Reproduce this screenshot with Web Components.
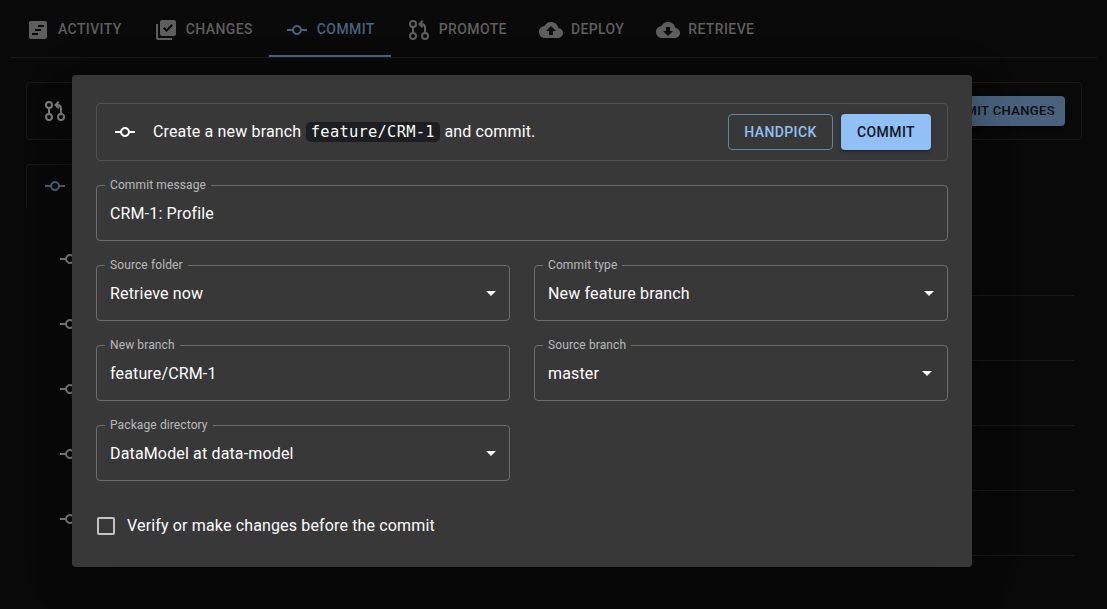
<!DOCTYPE html>
<html lang="en">
<head>
<meta charset="utf-8">
<title>Commit</title>
<style>
html,body{margin:0;height:100%;background:#090909;overflow:hidden}
body{font-family:Roboto,"Liberation Sans",sans-serif;color:#fff}
</style>
</head>
<body>
<commit-app></commit-app>
<script>
const ICONS = {
  activity:'<path d="M19 3H5c-1.1 0-2 .9-2 2v14c0 1.1.9 2 2 2h14c1.1 0 2-.9 2-2V5c0-1.1-.9-2-2-2zm-7 14H6v-2h6v2zm3-4H9v-2h6v2zm3-4h-6V7h6v2z"/>',
  changes:'<path d="M20 2H8c-1.1 0-2 .9-2 2v12c0 1.1.9 2 2 2h12c1.1 0 2-.9 2-2V4c0-1.1-.9-2-2-2zm-7.53 12L9 10.5l1.4-1.41 2.07 2.08L17.6 6 19 7.41 12.47 14zM4 6H2v14c0 1.1.9 2 2 2h14v-2H4V6z"/>',
  commit:'<path d="M16.9 11c-.46-2.28-2.48-4-4.9-4s-4.44 1.72-4.9 4H2v2h5.1c.46 2.28 2.48 4 4.9 4s4.44-1.72 4.9-4H22v-2h-5.1zM12 15c-1.66 0-3-1.34-3-3s1.34-3 3-3 3 1.34 3 3-1.34 3-3 3z"/>',
  promote:'<g fill="none" stroke="currentColor" stroke-width="2"><circle cx="6" cy="6" r="3"/><circle cx="6" cy="18" r="3"/><circle cx="18" cy="18" r="3"/><path d="M6 9v6M18 15V9.500Q18 6 14.500 6H13M15.700 2.800L12.500 6l3.200 3.200"/></g>',
  deploy:'<path d="M19.35 10.04C18.67 6.59 15.64 4 12 4 9.11 4 6.6 5.64 5.35 8.04 2.34 8.36 0 10.91 0 14c0 3.31 2.69 6 6 6h13c2.76 0 5-2.24 5-5 0-2.64-2.05-4.78-4.65-4.96zM14 13v4h-4v-4H7l5-5 5 5h-3z"/>',
  retrieve:'<path d="M19.35 10.04C18.67 6.59 15.64 4 12 4 9.11 4 6.6 5.64 5.35 8.04 2.34 8.36 0 10.91 0 14c0 3.31 2.69 6 6 6h13c2.76 0 5-2.24 5-5 0-2.64-2.05-4.78-4.65-4.96zM17 13l-5 5-5-5h3V9h4v4h3z"/>',
  arrow:'<path d="M7 10l5 5 5-5z"/>',
  checkbox:'<path d="M19 5v14H5V5h14m0-2H5c-1.100 0-2 .9-2 2v14c0 1.100.9 2 2 2h14c1.100 0 2-.9 2-2V5c0-1.100-.9-2-2-2z"/>'
};
const define = (name, render) => customElements.define(name, class extends HTMLElement {
  connectedCallback(){
    if (!this.shadowRoot) this.attachShadow({mode:'open'}).innerHTML = render(this);
  }
});

define('ui-icon', el => `<style>:host{display:block;flex:none;width:24px;height:24px}svg{display:block;fill:currentColor}</style>
<svg width="24" height="24" viewBox="0 0 24 24">${ICONS[el.getAttribute('name')]}</svg>`);

define('nav-tab', el => `<style>
:host{display:flex;align-items:center;gap:8px;height:54px;padding:0 16px;color:#5e5e5e;font-size:14px;font-weight:500;letter-spacing:.39px;box-sizing:border-box;white-space:nowrap}
:host([selected]){color:#48617c;box-shadow:inset 0 -2px #48617c}
span{line-height:16px;margin-top:-3px}
</style><ui-icon name="${el.getAttribute('icon')}"></ui-icon><span><slot></slot></span>`);

define('ui-button', () => `<style>
:host{display:flex;align-items:center;justify-content:center;box-sizing:border-box;height:36px;padding:0 16px;border-radius:4px;font-size:14px;font-weight:500;letter-spacing:.4px;white-space:nowrap;color:#0e161d;background:#90c0f6;box-shadow:0 3px 1px -2px rgba(0,0,0,.2),0 2px 2px rgba(0,0,0,.14),0 1px 5px rgba(0,0,0,.12)}
:host([outlined]){background:none;border:1px solid #6482a3;width:105px;padding:0 15px;color:#90c0f6;box-shadow:none}
:host([muted]){height:30px;padding:0 10px 2px;font-size:13px;letter-spacing:.37px;background:#48617c;color:#080b0f}
</style><slot></slot>`);

define('form-field', el => `<style>
:host{display:block;min-width:0}
fieldset{margin:0;min-width:0;height:61px;box-sizing:border-box;border:1px solid #6d6d6d;border-radius:4px;padding:0 13px 0 8px;display:block}
legend{padding:0 5px;font-size:12px;line-height:11px;height:11px;letter-spacing:.11px;color:#bababa;white-space:nowrap}
div{display:flex;align-items:center;justify-content:space-between;height:45px;padding-left:5px;margin-right:-7px}
span{font-size:16px;line-height:24px;letter-spacing:.15px;white-space:nowrap}
ui-icon{margin:0 var(--arrow-inset,0px) 2px 0}
</style><fieldset><legend>${el.getAttribute('label')}</legend><div><span><slot></slot></span>${el.hasAttribute('select')?'<ui-icon name="arrow"></ui-icon>':''}</div></fieldset>`);

define('commit-row', () => `<style>
:host{display:flex;height:65px;box-sizing:border-box;padding-top:16px;gap:16px;color:#7e7e7e}
i{flex:1;height:48px;border-bottom:1px solid #191919}
</style><ui-icon name="commit"></ui-icon><i></i>`);

define('commit-dialog', () => `<style>
:host{display:flex;flex-direction:column;box-sizing:border-box;width:900px;height:492px;padding:28px 24px 0;border-radius:4px;background:#383838;box-shadow:0 11px 15px -7px rgba(0,0,0,.2),0 24px 38px 3px rgba(0,0,0,.14),0 9px 46px 8px rgba(0,0,0,.12)}
.bar{display:flex;align-items:center;box-sizing:border-box;height:58px;border:1px solid #515151;border-radius:4px;padding:0 16px}
.bar p{flex:1;margin:0 0 0 16px;font-size:16px;line-height:24px;letter-spacing:.15px;white-space:nowrap}
code{font:15.400px/18px "DejaVu Sans Mono",monospace;letter-spacing:.27px;background:#1c1e22;border-radius:5px;padding:1px 4.900px;margin:0 .6px}
.buttons{display:flex;gap:8px}
.grid{display:grid;grid-template-columns:414px 414px;gap:19px 24px;margin-top:19px}
.wide{grid-column:1/3}
.inset{--arrow-inset:2px}
.check{display:flex;align-items:center;gap:9px;margin:33px 0 0 -2px;font-size:16px;letter-spacing:.15px;line-height:24px}
.check ui-icon{color:#c3c3c3}
</style>
<div class="bar"><ui-icon name="commit"></ui-icon><p>Create a new branch <code>feature/CRM-1</code> and commit.</p><div class="buttons"><ui-button outlined>HANDPICK</ui-button><ui-button>COMMIT</ui-button></div></div>
<div class="grid">
<form-field class="wide" label="Commit message">CRM-1: Profile</form-field>
<form-field select label="Source folder">Retrieve now</form-field>
<form-field select label="Commit type">New feature branch</form-field>
<form-field label="New branch">feature/CRM-1</form-field>
<form-field select class="inset" label="Source branch">master</form-field>
<form-field select label="Package directory">DataModel at data-model</form-field>
</div>
<div class="check"><ui-icon name="checkbox"></ui-icon><span>Verify or make changes before the commit</span></div>`);

define('commit-app', () => `<style>
:host{display:block;height:609px;overflow:hidden}
nav{display:flex;margin:0 10px;padding-top:3px;border-bottom:1px solid #191919}
.banner{display:flex;align-items:center;justify-content:space-between;box-sizing:border-box;height:58px;margin:24px 25px 0 26px;padding:0 16px;border:1px solid #191919;border-radius:4px;color:#7e7e7e}
.tab{display:flex;box-sizing:border-box;width:200px;height:44px;margin:24px 0 0 26px;padding:9px 16px;border:1px solid #191919;border-width:1px 0 0 1px;border-radius:4px 4px 0 0;color:#48617c}
.rows{margin:23px 33px 0 58px}
commit-dialog{position:absolute;left:72px;top:75px}
</style>
<nav><nav-tab icon="activity">ACTIVITY</nav-tab><nav-tab icon="changes">CHANGES</nav-tab><nav-tab icon="commit" selected>COMMIT</nav-tab><nav-tab icon="promote">PROMOTE</nav-tab><nav-tab icon="deploy">DEPLOY</nav-tab><nav-tab icon="retrieve">RETRIEVE</nav-tab></nav>
<section class="banner"><ui-icon name="promote"></ui-icon><ui-button muted>COMMIT CHANGES</ui-button></section>
<div class="tab"><ui-icon name="commit"></ui-icon></div>
<div class="rows">${'<commit-row></commit-row>'.repeat(5)}</div>
<commit-dialog></commit-dialog>`);
</script>
</body>
</html>
